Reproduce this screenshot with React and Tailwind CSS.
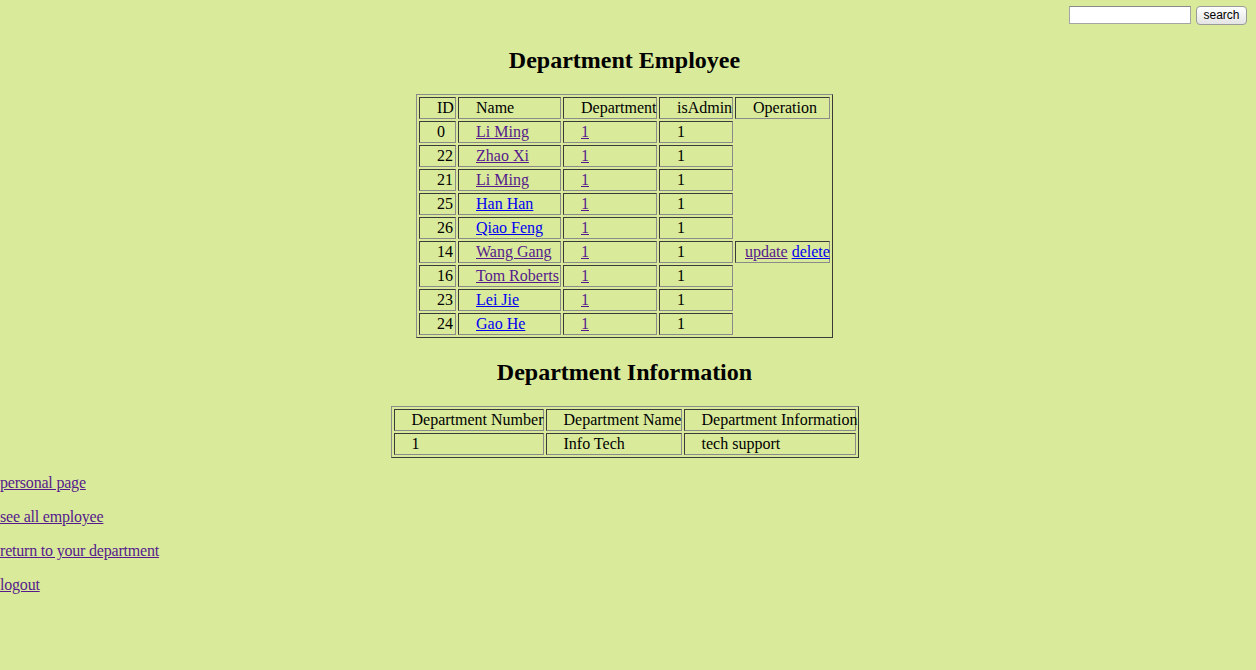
import React from 'react';

const employees = [
  { id: 0, name: 'Li Ming', visited: true },
  { id: 22, name: 'Zhao Xi', visited: true },
  { id: 21, name: 'Li Ming', visited: true },
  { id: 25, name: 'Han Han', visited: false },
  { id: 26, name: 'Qiao Feng', visited: false },
  { id: 14, name: 'Wang Gang', visited: true, ops: true },
  { id: 16, name: 'Tom Roberts', visited: true },
  { id: 23, name: 'Lei Jie', visited: false },
  { id: 24, name: 'Gao He', visited: false },
];

const base =
  'h-[22px] py-[1px] pr-[1px] text-left font-normal align-middle whitespace-nowrap border border-solid border-t-[#3a3a3a] border-l-[#3a3a3a] border-b-[#8a8a8a] border-r-[#8a8a8a]';
const cell = `${base} pl-[17px]`;

const tableCls =
  'mx-auto table-fixed border-separate border-spacing-[2px] border border-solid border-t-[#8a8a8a] border-l-[#8a8a8a] border-b-[#3a3a3a] border-r-[#3a3a3a]';

const Link = ({ visited, children }) => (
  <a href="#" className={`underline ${visited ? 'text-[#551a8b]' : 'text-[#0000ee]'}`}>
    {children}
  </a>
);

const App = () => {
  return (
    <div className="min-h-[670px] bg-[#d9ea9b]">
      <div className="w-[1249px] text-[16px] leading-[18px] text-black font-['Liberation_Serif','Times_New_Roman',serif]">
        <div className="h-[26px] flex justify-end items-start pt-[6px] pr-[2px] gap-[5px]">
          <input
            type="text"
            className="w-[122px] h-[18px] bg-white border border-solid border-[#a5a5a5] border-t-[#8a8a8a]"
          />
          <button className="w-[51px] h-[19px] px-0 rounded-[4px] border border-solid border-[#9a9a9a] bg-gradient-to-b from-white to-[#e4e4e4] text-[12px] leading-[15px] font-['Liberation_Sans','DejaVu_Sans',sans-serif]">
            search
          </button>
        </div>

        <h2 className="mt-[20px] mb-[20px] text-center text-[24px] leading-[28px] font-bold">
          Department Employee
        </h2>

        <table className={`${tableCls} w-[417px]`}>
          <thead>
            <tr>
              <th className={`${cell} w-[37px]`}>ID</th>
              <th className={`${cell} w-[103px]`}>Name</th>
              <th className={`${cell} w-[94px]`}>Department</th>
              <th className={`${cell} w-[74px]`}>isAdmin</th>
              <th className={`${cell} w-[95px]`}>Operation</th>
            </tr>
          </thead>
          <tbody>
            {employees.map((e, i) => (
              <tr key={i}>
                <td className={cell}>{e.id}</td>
                <td className={cell}>
                  <Link visited={e.visited}>{e.name}</Link>
                </td>
                <td className={cell}>
                  <Link visited>1</Link>
                </td>
                <td className={cell}>1</td>
                {e.ops ? (
                  <td className={`${base} pl-[9px]`}>
                    <Link visited>update</Link> <Link visited={false}>delete</Link>
                  </td>
                ) : (
                  <td className="h-[22px] p-0" />
                )}
              </tr>
            ))}
          </tbody>
        </table>

        <h2 className="mt-[20px] mb-[20px] text-center text-[24px] leading-[28px] font-bold">
          Department Information
        </h2>

        <table className={`${tableCls} w-[468px]`}>
          <thead>
            <tr>
              <th className={`${cell} w-[150px]`}>Department Number</th>
              <th className={`${cell} w-[136px]`}>Department Name</th>
              <th className={`${cell} w-[172px]`}>Department Information</th>
            </tr>
          </thead>
          <tbody>
            <tr>
              <td className={cell}>1</td>
              <td className={cell}>Info Tech</td>
              <td className={cell}>tech support</td>
            </tr>
          </tbody>
        </table>

        <div className="mt-[16px] tracking-[-0.2px]">
          <p className="mb-[16px]">
            <Link visited>personal page</Link>
          </p>
          <p className="mb-[16px]">
            <Link visited>see all employee</Link>
          </p>
          <p className="mb-[16px]">
            <Link visited>return to your department</Link>
          </p>
          <p className="mb-[16px]">
            <Link visited>logout</Link>
          </p>
        </div>
      </div>
    </div>
  );
};

export default App;
